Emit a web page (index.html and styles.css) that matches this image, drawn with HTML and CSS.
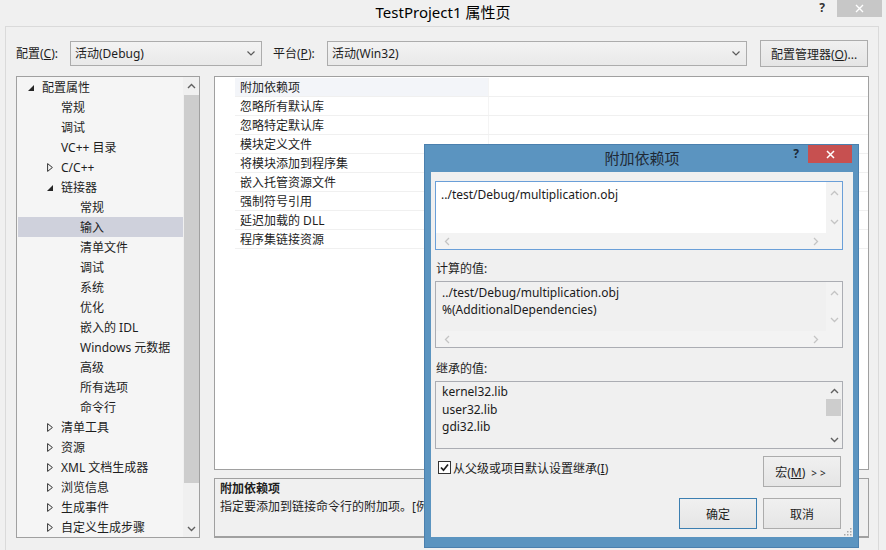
FILE: index.html
```html
<!DOCTYPE html>
<html>
<head>
<meta charset="utf-8">
<title>TestProject1 属性页</title>
<link rel="stylesheet" href="styles.css">
</head>
<body>
<div class="titlebar">
  <div class="tb-side"></div>
  <div class="tb-title">TestProject1 属性页</div>
  <div class="tb-side tb-right">
    <span class="tb-help">?</span>
    <span class="tb-close"><svg width="9" height="9" viewBox="0 0 9 9"><path d="M1 1 L8 8 M8 1 L1 8" stroke="#fff" stroke-width="1.4" fill="none"/></svg></span>
  </div>
</div>
<div class="client">
  <div class="configbar">
    <span class="cfg-label">配置(<u>C</u>):</span>
    <div class="combo combo-cfg"><span class="combo-text">活动(Debug)</span><svg class="combo-arrow" width="8" height="5" viewBox="0 0 8 5"><path d="M0.5 0.5 L4 4 L7.5 0.5" stroke="#5a5a5a" stroke-width="1.2" fill="none"/></svg></div>
    <span class="cfg-label cfg-label2">平台(<u>P</u>):</span>
    <div class="combo combo-plat"><span class="combo-text">活动(Win32)</span><svg class="combo-arrow" width="8" height="5" viewBox="0 0 8 5"><path d="M0.5 0.5 L4 4 L7.5 0.5" stroke="#5a5a5a" stroke-width="1.2" fill="none"/></svg></div>
    <button class="btn btn-mgr">配置管理器(<u>O</u>)...</button>
  </div>
  <div class="main">
    <div class="tree">
      <div class="tree-list">
        <div class="trow l0"><span class="exp"><svg width="6" height="6" viewBox="0 0 6 6"><polygon points="6,0 6,6 0,6" fill="#262626"/></svg></span><span class="tlabel">配置属性</span></div>
        <div class="trow l1"><span class="exp"></span><span class="tlabel">常规</span></div>
        <div class="trow l1"><span class="exp"></span><span class="tlabel">调试</span></div>
        <div class="trow l1"><span class="exp"></span><span class="tlabel">VC++ 目录</span></div>
        <div class="trow l1"><span class="exp"><svg width="6" height="9" viewBox="0 0 6 9"><polygon points="0.6,0.6 5.4,4.5 0.6,8.4" fill="none" stroke="#333" stroke-width="1"/></svg></span><span class="tlabel">C/C++</span></div>
        <div class="trow l1"><span class="exp"><svg width="6" height="6" viewBox="0 0 6 6"><polygon points="6,0 6,6 0,6" fill="#262626"/></svg></span><span class="tlabel">链接器</span></div>
        <div class="trow l2"><span class="exp"></span><span class="tlabel">常规</span></div>
        <div class="trow l2 selected"><span class="exp"></span><span class="tlabel">输入</span></div>
        <div class="trow l2"><span class="exp"></span><span class="tlabel">清单文件</span></div>
        <div class="trow l2"><span class="exp"></span><span class="tlabel">调试</span></div>
        <div class="trow l2"><span class="exp"></span><span class="tlabel">系统</span></div>
        <div class="trow l2"><span class="exp"></span><span class="tlabel">优化</span></div>
        <div class="trow l2"><span class="exp"></span><span class="tlabel">嵌入的 IDL</span></div>
        <div class="trow l2"><span class="exp"></span><span class="tlabel">Windows 元数据</span></div>
        <div class="trow l2"><span class="exp"></span><span class="tlabel">高级</span></div>
        <div class="trow l2"><span class="exp"></span><span class="tlabel">所有选项</span></div>
        <div class="trow l2"><span class="exp"></span><span class="tlabel">命令行</span></div>
        <div class="trow l1"><span class="exp"><svg width="6" height="9" viewBox="0 0 6 9"><polygon points="0.6,0.6 5.4,4.5 0.6,8.4" fill="none" stroke="#333" stroke-width="1"/></svg></span><span class="tlabel">清单工具</span></div>
        <div class="trow l1"><span class="exp"><svg width="6" height="9" viewBox="0 0 6 9"><polygon points="0.6,0.6 5.4,4.5 0.6,8.4" fill="none" stroke="#333" stroke-width="1"/></svg></span><span class="tlabel">资源</span></div>
        <div class="trow l1"><span class="exp"><svg width="6" height="9" viewBox="0 0 6 9"><polygon points="0.6,0.6 5.4,4.5 0.6,8.4" fill="none" stroke="#333" stroke-width="1"/></svg></span><span class="tlabel">XML 文档生成器</span></div>
        <div class="trow l1"><span class="exp"><svg width="6" height="9" viewBox="0 0 6 9"><polygon points="0.6,0.6 5.4,4.5 0.6,8.4" fill="none" stroke="#333" stroke-width="1"/></svg></span><span class="tlabel">浏览信息</span></div>
        <div class="trow l1"><span class="exp"><svg width="6" height="9" viewBox="0 0 6 9"><polygon points="0.6,0.6 5.4,4.5 0.6,8.4" fill="none" stroke="#333" stroke-width="1"/></svg></span><span class="tlabel">生成事件</span></div>
        <div class="trow l1"><span class="exp"><svg width="6" height="9" viewBox="0 0 6 9"><polygon points="0.6,0.6 5.4,4.5 0.6,8.4" fill="none" stroke="#333" stroke-width="1"/></svg></span><span class="tlabel">自定义生成步骤</span></div>
      </div>
      <div class="tree-scroll">
        <div class="sb-cell"><svg width="9" height="6" viewBox="0 0 9 6"><path d="M1 5 L4.5 1.5 L8 5" stroke="#606060" stroke-width="1.4" fill="none"/></svg></div>
        <div class="sb-thumb"></div>
        <div class="sb-space"></div>
        <div class="sb-cell"><svg width="9" height="6" viewBox="0 0 9 6"><path d="M1 1 L4.5 4.5 L8 1" stroke="#606060" stroke-width="1.4" fill="none"/></svg></div>
      </div>
    </div>
    <div class="rightpane">
      <div class="propgrid">
        <div class="prow first"><div class="pname">附加依赖项</div><div class="pval"></div></div>
        <div class="prow"><div class="pname">忽略所有默认库</div><div class="pval"></div></div>
        <div class="prow"><div class="pname">忽略特定默认库</div><div class="pval"></div></div>
        <div class="prow"><div class="pname">模块定义文件</div><div class="pval"></div></div>
        <div class="prow"><div class="pname">将模块添加到程序集</div><div class="pval"></div></div>
        <div class="prow"><div class="pname">嵌入托管资源文件</div><div class="pval"></div></div>
        <div class="prow"><div class="pname">强制符号引用</div><div class="pval"></div></div>
        <div class="prow"><div class="pname">延迟加载的 DLL</div><div class="pval"></div></div>
        <div class="prow"><div class="pname">程序集链接资源</div><div class="pval"></div></div>
      </div>
      <div class="desc">
        <div class="desc-title">附加依赖项</div>
        <div class="desc-text">指定要添加到链接命令行的附加项。[例如 kernel32.lib]</div>
      </div>
    </div>
  </div>
</div>

<div class="dialog">
  <div class="dlg-title">
    <div></div>
    <div class="dlg-caption">附加依赖项</div>
    <div class="dlg-ctrls">
      <span class="dlg-help">?</span>
      <span class="dlg-close"><svg width="9" height="9" viewBox="0 0 9 9"><path d="M1 1 L8 8 M8 1 L1 8" stroke="#fff" stroke-width="1.5" fill="none"/></svg></span>
    </div>
  </div>
  <div class="dlg-client">
    <div class="tb tb1">
      <div class="tb-main">
        <div class="tb-text tb-white">../test/Debug/multiplication.obj</div>
        <div class="vs vs-dis">
          <svg width="9" height="6" viewBox="0 0 9 6"><path d="M1 5 L4.5 1.5 L8 5" stroke="#c4c4c4" stroke-width="1.3" fill="none"/></svg>
          <svg width="9" height="6" viewBox="0 0 9 6"><path d="M1 1 L4.5 4.5 L8 1" stroke="#c4c4c4" stroke-width="1.3" fill="none"/></svg>
        </div>
      </div>
      <div class="hs">
        <div class="hs-track">
          <svg width="6" height="9" viewBox="0 0 6 9"><path d="M5 1 L1.5 4.5 L5 8" stroke="#c4c4c4" stroke-width="1.3" fill="none"/></svg>
          <svg width="6" height="9" viewBox="0 0 6 9"><path d="M1 1 L4.5 4.5 L1 8" stroke="#c4c4c4" stroke-width="1.3" fill="none"/></svg>
        </div>
        <div class="hs-corner"></div>
      </div>
    </div>
    <div class="dlg-label">计算的值:</div>
    <div class="tb tb2">
      <div class="tb-main">
        <div class="tb-text tb-text2">../test/Debug/multiplication.obj<br>%(AdditionalDependencies)</div>
        <div class="vs vs-dis">
          <svg width="9" height="6" viewBox="0 0 9 6"><path d="M1 5 L4.5 1.5 L8 5" stroke="#c4c4c4" stroke-width="1.3" fill="none"/></svg>
          <svg width="9" height="6" viewBox="0 0 9 6"><path d="M1 1 L4.5 4.5 L8 1" stroke="#c4c4c4" stroke-width="1.3" fill="none"/></svg>
        </div>
      </div>
      <div class="hs">
        <div class="hs-track">
          <svg width="6" height="9" viewBox="0 0 6 9"><path d="M5 1 L1.5 4.5 L5 8" stroke="#c4c4c4" stroke-width="1.3" fill="none"/></svg>
          <svg width="6" height="9" viewBox="0 0 6 9"><path d="M1 1 L4.5 4.5 L1 8" stroke="#c4c4c4" stroke-width="1.3" fill="none"/></svg>
        </div>
        <div class="hs-corner"></div>
      </div>
    </div>
    <div class="dlg-label dlg-label2">继承的值:</div>
    <div class="tb tb3">
      <div class="tb-main">
        <div class="tb-text tb-text3">kernel32.lib<br>user32.lib<br>gdi32.lib</div>
        <div class="vs3">
          <div class="sb-cell"><svg width="9" height="6" viewBox="0 0 9 6"><path d="M1 5 L4.5 1.5 L8 5" stroke="#606060" stroke-width="1.4" fill="none"/></svg></div>
          <div class="vs3-thumb"></div>
          <div class="sb-space"></div>
          <div class="sb-cell"><svg width="9" height="6" viewBox="0 0 9 6"><path d="M1 1 L4.5 4.5 L8 1" stroke="#606060" stroke-width="1.4" fill="none"/></svg></div>
        </div>
      </div>
    </div>
    <div class="dlg-row1">
      <label class="chk-wrap">
        <svg class="chk" width="13" height="13" viewBox="0 0 13 13"><rect x="0.5" y="0.5" width="12" height="12" fill="#fff" stroke="#333"/><path d="M3 6.5 L5.5 9.2 L10 3.5" stroke="#1e1e1e" stroke-width="1.7" fill="none"/></svg>
        <span>从父级或项目默认设置继承(<u>I</u>)</span>
      </label>
      <button class="dbtn">宏(<u>M</u>)<span class="gtgt">&gt;&gt;</span></button>
    </div>
    <div class="dlg-row2">
      <button class="dbtn dbtn-default">确定</button>
      <button class="dbtn">取消</button>
    </div>
    <svg class="grip" width="10" height="10" viewBox="0 0 10 10"><g fill="#a8a8a8"><rect x="8" y="2" width="1.5" height="1.5"/><rect x="5" y="5" width="1.5" height="1.5"/><rect x="8" y="5" width="1.5" height="1.5"/><rect x="2" y="8" width="1.5" height="1.5"/><rect x="5" y="8" width="1.5" height="1.5"/><rect x="8" y="8" width="1.5" height="1.5"/></g></svg>
  </div>
</div>
</body>
</html>
```
FILE: styles.css
```css
* { box-sizing: border-box; }
html, body { margin: 0; padding: 0; }
body {
  width: 886px;
  height: 550px;
  overflow: hidden;
  position: relative;
  background: #f0f0f0;
  font-family: "Noto Sans", "Noto Sans CJK SC", sans-serif;
  font-size: 12px;
  color: #1e1e1e;
}
u { text-decoration: underline; }

/* title bar */
.titlebar {
  height: 26px;
  display: grid;
  grid-template-columns: 1fr auto 1fr;
  align-items: start;
}
.tb-title {
  font-size: 15px;
  line-height: 24px;
  color: #000;
}
.tb-right { display: flex; justify-content: flex-end; align-items: flex-start; }
.tb-help {
  width: 30px;
  text-align: center;
  font-weight: bold;
  font-size: 12px;
  line-height: 16px;
  color: #333;
}
.tb-close {
  width: 45px;
  height: 17px;
  margin-right: 4px;
  background: #c7c7c7;
  display: flex;
  align-items: center;
  justify-content: center;
}

/* client */
.client {
  margin: 0 7px 0 5px;
  border-top: 1px solid #dadada;
  border-left: 1px solid #dadada;
  border-right: 1px solid #dadada;
  height: 524px;
}
.configbar {
  display: flex;
  align-items: center;
  padding: 13px 0 0 10px;
  height: 40px;
}
.cfg-label { width: 54px; line-height: 20px; }
.cfg-label2 { margin-left: 11px; }
.combo {
  height: 25px;
  border: 1px solid #acacac;
  background: linear-gradient(#f3f3f3, #e9e9e9);
  display: flex;
  align-items: center;
  padding: 0 6px 0 4px;
}
.combo-cfg { width: 192px; }
.combo-plat { width: 420px; }
.combo-text { flex: 1; line-height: 20px; }
.btn {
  margin-left: 13px;
  width: 108px;
  height: 27px;
  border: 1px solid #acacac;
  background: linear-gradient(#f0f0f0, #e5e5e5);
  font-family: inherit;
  font-size: 12px;
  color: #1e1e1e;
  padding: 0;
}

.main {
  display: flex;
  gap: 14px;
  padding-left: 10px;
  margin-top: 9px;
  height: 462px;
}

/* tree */
.tree {
  width: 184px;
  height: 462px;
  border: 1px solid #a0a0a0;
  background: #f5f5f5;
  display: flex;
  overflow: hidden;
}
.tree-list { flex: 1; padding-left: 1px; }
.trow {
  height: 20px;
  display: flex;
  align-items: center;
  white-space: nowrap;
}
.trow.l0 { padding-left: 8px; }
.trow.l1 { padding-left: 27px; }
.trow.l2 { padding-left: 46px; }
.trow.selected { background: #cfd1dc; }
.exp {
  width: 10px;
  height: 20px;
  display: flex;
  align-items: center;
  justify-content: center;
  padding-top: 1px;
}
.tlabel { margin-left: 6px; line-height: 20px; padding-top: 2px; }
.tree-scroll {
  width: 16px;
  display: flex;
  flex-direction: column;
  background: #f0f0f0;
}
.sb-cell {
  height: 17px;
  display: flex;
  align-items: center;
  justify-content: center;
  flex: none;
}
.sb-thumb {
  margin: 1px 0 0 1px;
  height: 388px;
  background: #cdcdcd;
}
.sb-space { flex: 1; }

/* right pane */
.rightpane {
  width: 655px;
  display: flex;
  flex-direction: column;
  gap: 8px;
}
.propgrid {
  height: 394px;
  border: 1px solid #a0a0a0;
  background: #fff;
  padding: 1px 0 0 20px;
}
.prow {
  height: 19px;
  display: flex;
  border-bottom: 1px solid #f0f0f0;
}
.pname {
  width: 253px;
  padding: 1px 0 0 5px;
  line-height: 18px;
  white-space: nowrap;
}
.prow.first .pname { background: #f3f5f9; }
.pval { flex: 1; border-left: 1px solid #f4f4f4; }
.desc {
  height: 60px;
  border: 1px solid #a0a0a0;
  border-bottom: 2px solid #a0a0a0;
  padding: 1px 5px 0;
  line-height: 18px;
  overflow: hidden;
  white-space: nowrap;
}
.desc-title { font-weight: bold; }

/* dialog */
.dialog {
  position: absolute;
  left: 424px;
  top: 144px;
  width: 435px;
  height: 404px;
  background: #5b94c0;
  border: 1px solid #4b80ae;
  padding: 0 5px 10px 6px;
  display: flex;
  flex-direction: column;
}
.dlg-title {
  height: 27px;
  display: grid;
  grid-template-columns: 1fr auto 1fr;
  align-items: start;
  flex: none;
}
.dlg-caption {
  font-size: 15px;
  line-height: 27px;
  color: #1f2a36;
}
.dlg-ctrls { display: flex; justify-content: flex-end; }
.dlg-help {
  width: 24px;
  text-align: center;
  font-weight: bold;
  font-size: 12px;
  line-height: 18px;
  color: #1c2a38;
}
.dlg-close {
  width: 44px;
  height: 18px;
  margin-right: 1px;
  background: #c75050;
  display: flex;
  align-items: center;
  justify-content: center;
}
.dlg-client {
  flex: 1;
  background: #f0f0f0;
  padding: 9px 10px 0 4px;
  display: flex;
  flex-direction: column;
  position: relative;
}
.tb {
  border: 1px solid #abadb3;
  display: flex;
  flex-direction: column;
  flex: none;
  background: #f0f0f0;
}
.tb1 { height: 69px; border-color: #6a9fd8; }
.tb2 { height: 67px; }
.tb3 { height: 68px; }
.tb-main { flex: 1; display: flex; min-height: 0; }
.tb-text {
  flex: 1;
  padding: 4px 5px;
  line-height: 17px;
  white-space: nowrap;
  color: #1a1a1a;
}
.tb-white { background: #fff; }
.tb-text2 { padding: 2px 6px; }
.tb-text3 { padding: 1px 6px; line-height: 17.5px; }
.vs {
  width: 16px;
  display: flex;
  flex-direction: column;
  justify-content: space-between;
  align-items: center;
  padding: 8px 0;
  background: #f3f3f3;
}
.hs {
  height: 16px;
  display: flex;
  flex: none;
}
.hs-track {
  flex: 1;
  display: flex;
  justify-content: space-between;
  align-items: center;
  padding: 0 7px 0 8px;
  background: #f3f3f3;
}
.hs-corner { width: 16px; background: #f3f3f3; }
.vs3 {
  width: 16px;
  display: flex;
  flex-direction: column;
  background: #f0f0f0;
}
.vs3-thumb {
  height: 17px;
  width: 15px;
  background: #cdcdcd;
}
.dlg-label {
  padding-top: 9px;
  line-height: 20px;
  margin-bottom: 2px;
  padding-left: 1px;
}
.dlg-label2 { padding-top: 11px; }
.dlg-row1 {
  margin-top: 7px;
  height: 31px;
  display: flex;
  justify-content: space-between;
  align-items: flex-start;
  margin-right: 2px;
}
.chk-wrap {
  display: flex;
  align-items: center;
  gap: 2px;
  height: 23px;
  margin-left: 3px;
}
.chk { flex: none; }
.dbtn {
  width: 78px;
  height: 31px;
  border: 1px solid #acacac;
  background: linear-gradient(#f0f0f0, #e5e5e5);
  font-family: inherit;
  font-size: 12px;
  color: #1e1e1e;
  padding: 0;
}
.dbtn-default { border-color: #3c7fb1; }
.gtgt { font-size: 10px; letter-spacing: 3px; margin-left: 6px; }
.dlg-row2 {
  margin-top: 11px;
  display: flex;
  justify-content: flex-end;
  gap: 6px;
  margin-right: 2px;
}
.grip {
  position: absolute;
  right: 1px;
  bottom: 1px;
}
```
